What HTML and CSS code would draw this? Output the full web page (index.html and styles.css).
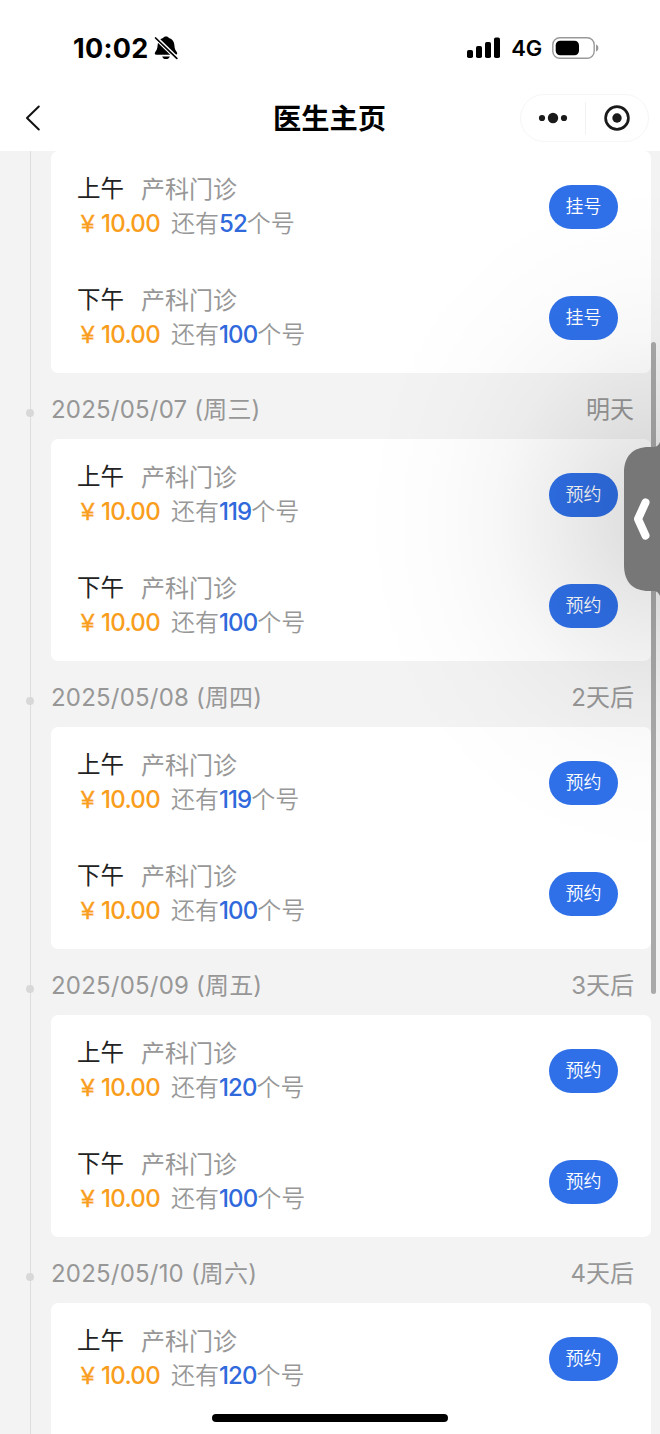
FILE: index.html
```
<!DOCTYPE html>
<html lang="zh-CN">
<head>
<meta charset="utf-8">
<title>医生主页</title>
<link rel="stylesheet" href="styles.css">
</head>
<body>
<div class="screen">
  <header class="top">
    <div class="status">
      <div class="clock"><span class="time">10:02</span>
        <svg class="bell" width="24" height="24" viewBox="0 0 24 24"><path d="M12 .6c1.500 0 2.500.6 3 1.500 3.500 1 5.200 3.700 5.400 7.200.2 3.500.9 4.900 2.300 6.600 1 1.200.5 2.900-1.200 2.900H2.500c-1.700 0-2.200-1.700-1.200-2.900 1.400-1.700 2.100-3.100 2.300-6.600.2-3.500 1.900-6.200 5.400-7.200.5-.9 1.500-1.500 3-1.500zM8.200 20.500h7.600c-.4 1.600-1.900 2.600-3.800 2.600s-3.400-1-3.800-2.600z"/><path d="M.5 0.500L24 23.500" stroke="#fff" stroke-width="4.200"/><path d="M1.600 2L22.800 22.300" stroke="#000" stroke-width="1.700" stroke-linecap="round"/></svg>
      </div>
      <div class="signals">
        <svg width="34" height="22" viewBox="0 0 34 22"><rect x="0" y="13" width="6" height="8" rx="1.800"/><rect x="9" y="9" width="6" height="12" rx="1.800"/><rect x="18" y="5" width="6" height="16" rx="1.800"/><rect x="27" y="0.500" width="6" height="20.500" rx="1.800"/></svg>
        <span class="network">4G</span>
        <svg class="battery" width="48" height="22" viewBox="0 0 48 22"><rect x=".8" y=".8" width="41.400" height="20.400" rx="7" fill="none" stroke="#999" stroke-width="1.400"/><rect x="3.700" y="3.700" width="23.300" height="14.600" rx="4.500"/><path d="M44 7.500c1.500.5 2.400 1.900 2.400 3.500s-.9 3-2.400 3.500z" fill="#999"/></svg>
      </div>
    </div>
    <div class="nav">
      <svg class="back" width="16" height="26" viewBox="0 0 16 26"><path d="M13.800 1.500L2 13l11.800 11.500" fill="none" stroke="#111" stroke-width="2" stroke-linecap="round" stroke-linejoin="round"/></svg>
      <h1 class="title">医生主页</h1>
      <div class="capsule">
        <svg class="more" width="30" height="12" viewBox="0 0 30 12"><circle cx="4" cy="6" r="3.100"/><circle cx="15" cy="6" r="5.200"/><circle cx="26" cy="6" r="3.100"/></svg>
        <span class="split"></span>
        <svg class="target" width="26" height="26" viewBox="0 0 26 26"><circle cx="13" cy="13" r="11.400" fill="none" stroke="#1a1a1a" stroke-width="2.700"/><circle cx="13" cy="13" r="4.700"/></svg>
      </div>
    </div>
  </header>
  <main class="timeline">
    <section class="card">
      <div class="slot"><div class="info"><p class="line"><span class="period">上午</span><span class="dept">产科门诊</span></p><p class="line"><span class="yen">¥</span><span class="price">10.00</span><span class="left">还有<b>52</b>个号</span></p></div><button class="book">挂号</button></div>
      <div class="slot"><div class="info"><p class="line"><span class="period">下午</span><span class="dept">产科门诊</span></p><p class="line"><span class="yen">¥</span><span class="price">10.00</span><span class="left">还有<b>100</b>个号</span></p></div><button class="book">挂号</button></div>
    </section>
    <div class="day"><i class="dot"></i><span class="date">2025/05/07 (周三)</span><span class="rel">明天</span></div>
    <section class="card">
      <div class="slot"><div class="info"><p class="line"><span class="period">上午</span><span class="dept">产科门诊</span></p><p class="line"><span class="yen">¥</span><span class="price">10.00</span><span class="left">还有<b>119</b>个号</span></p></div><button class="book">预约</button></div>
      <div class="slot"><div class="info"><p class="line"><span class="period">下午</span><span class="dept">产科门诊</span></p><p class="line"><span class="yen">¥</span><span class="price">10.00</span><span class="left">还有<b>100</b>个号</span></p></div><button class="book">预约</button></div>
    </section>
    <div class="day"><i class="dot"></i><span class="date">2025/05/08 (周四)</span><span class="rel">2天后</span></div>
    <section class="card">
      <div class="slot"><div class="info"><p class="line"><span class="period">上午</span><span class="dept">产科门诊</span></p><p class="line"><span class="yen">¥</span><span class="price">10.00</span><span class="left">还有<b>119</b>个号</span></p></div><button class="book">预约</button></div>
      <div class="slot"><div class="info"><p class="line"><span class="period">下午</span><span class="dept">产科门诊</span></p><p class="line"><span class="yen">¥</span><span class="price">10.00</span><span class="left">还有<b>100</b>个号</span></p></div><button class="book">预约</button></div>
    </section>
    <div class="day"><i class="dot"></i><span class="date">2025/05/09 (周五)</span><span class="rel">3天后</span></div>
    <section class="card">
      <div class="slot"><div class="info"><p class="line"><span class="period">上午</span><span class="dept">产科门诊</span></p><p class="line"><span class="yen">¥</span><span class="price">10.00</span><span class="left">还有<b>120</b>个号</span></p></div><button class="book">预约</button></div>
      <div class="slot"><div class="info"><p class="line"><span class="period">下午</span><span class="dept">产科门诊</span></p><p class="line"><span class="yen">¥</span><span class="price">10.00</span><span class="left">还有<b>100</b>个号</span></p></div><button class="book">预约</button></div>
    </section>
    <div class="day"><i class="dot"></i><span class="date">2025/05/10 (周六)</span><span class="rel">4天后</span></div>
    <section class="card card-cut">
      <div class="slot"><div class="info"><p class="line"><span class="period">上午</span><span class="dept">产科门诊</span></p><p class="line"><span class="yen">¥</span><span class="price">10.00</span><span class="left">还有<b>120</b>个号</span></p></div><button class="book">预约</button></div>
    </section>
  </main>
  <div class="scrollbar"></div>
  <div class="shade"></div>
  <svg class="drawer" width="36" height="154" viewBox="0 0 36 154"><path d="M36 0c-1.500 3.500-3 5-7 5H25C9 5 0 14 0 31v92c0 17 9 26 25 26h4c4 0 5.500 1.500 7 5z" fill="#777"/><path d="M21.500 60.500L14 77l7.500 16.500" fill="none" stroke="#fff" stroke-width="8" stroke-linecap="round" stroke-linejoin="round"/></svg>
  <div class="home-bar"></div>
</div>
</body>
</html>
```
FILE: styles.css
```
* { box-sizing: border-box; }
body { margin: 0; background: #f3f3f3; font-family: Inter, "Noto Sans CJK SC", sans-serif; }
.screen { position: relative; width: 660px; height: 1434px; overflow: hidden; }
p, h1 { margin: 0; }
svg { display: block; flex: none; }

.top { height: 151px; background: #fff; }
.status { height: 84px; padding: 12px 60px 0 73px; display: flex; justify-content: space-between; align-items: center; }
.clock { display: flex; align-items: center; gap: 5px; }
.time { font-size: 27px; font-weight: 700; letter-spacing: .3px; line-height: 34px; padding-top: 2px; }
.signals { display: flex; align-items: center; gap: 10px; }
.network { font-size: 22px; font-weight: 600; letter-spacing: -.2px; }
.nav { height: 67px; padding: 0 11px 0 25px; display: grid; grid-template-columns: 114px 1fr 129px; align-items: center; }
.title { font-size: 28.3px; font-weight: 700; line-height: 40px; padding-top: 3px; text-align: center; }
.capsule { height: 48px; border: 1px solid #f6f6f6; border-radius: 24px; display: flex; align-items: center; padding: 0 17px; }
.split { width: 1px; height: 32px; background: #f2f2f2; margin: 0 18px 0 17px; }
.more, .target { fill: #1a1a1a; }

.timeline { height: 1283px; overflow: hidden; padding: 0 9px 0 51px; background: linear-gradient(#ddd, #ddd) 30px 0 / 1px 100% no-repeat #f3f3f3; }
.card { background: #fff; border-radius: 7px; }
.card-cut { height: 140px; }
.slot { height: 111px; padding: 0 33px 0 26px; display: flex; justify-content: space-between; align-items: center; }
.info { height: 72px; }
.line { height: 35px; line-height: 36px; display: flex; white-space: nowrap; font-size: 24px; color: #979797; }
.period { width: 64px; color: #222; font-size: 23.5px; }
.dept { color: #979797; padding-top: 1px; }
.yen, .price { color: #f99d1c; font-weight: 500; }
.yen { width: 24px; padding-left: 4px; font-size: 24px; font-family: "Liberation Sans", sans-serif; -webkit-text-stroke: .4px; }
.price { width: 70px; letter-spacing: -.7px; }
.left { font-weight: 350; }
.left b { color: #2f69dc; font-weight: 500; letter-spacing: -.9px; }
.book { width: 69px; height: 44px; border: 0; padding: 0 0 3px; border-radius: 22px; background: #2f70e9; color: #fff; font: 350 18px/40px "Noto Sans CJK SC", sans-serif; }
.day { position: relative; height: 66px; padding: 9px 17px 0 0; display: flex; justify-content: space-between; line-height: 56px; font-size: 24px; color: #979797; }
.dot { position: absolute; left: -25px; top: 36px; width: 8px; height: 8px; border-radius: 50%; background: #d8d8d8; }
.date, .rel { font-weight: 370; }
.date { letter-spacing: .2px; }

.scrollbar { position: absolute; left: 651px; top: 342px; width: 5px; height: 652px; border-radius: 3px; background: #a9a9a9; }
.shade { position: absolute; left: 360px; top: 151px; width: 300px; height: 740px; background: radial-gradient(ellipse 300px 340px at 300px 369px, rgba(0,0,0,.14), rgba(0,0,0,.115) 15%, rgba(0,0,0,.07) 34%, rgba(0,0,0,.032) 54%, rgba(0,0,0,.012) 74%, rgba(0,0,0,.004) 90%, transparent); }
.drawer { position: absolute; left: 624px; top: 442px; }
.home-bar { position: absolute; left: 212px; top: 1414px; width: 236px; height: 8px; border-radius: 4px; background: #000; }
```
